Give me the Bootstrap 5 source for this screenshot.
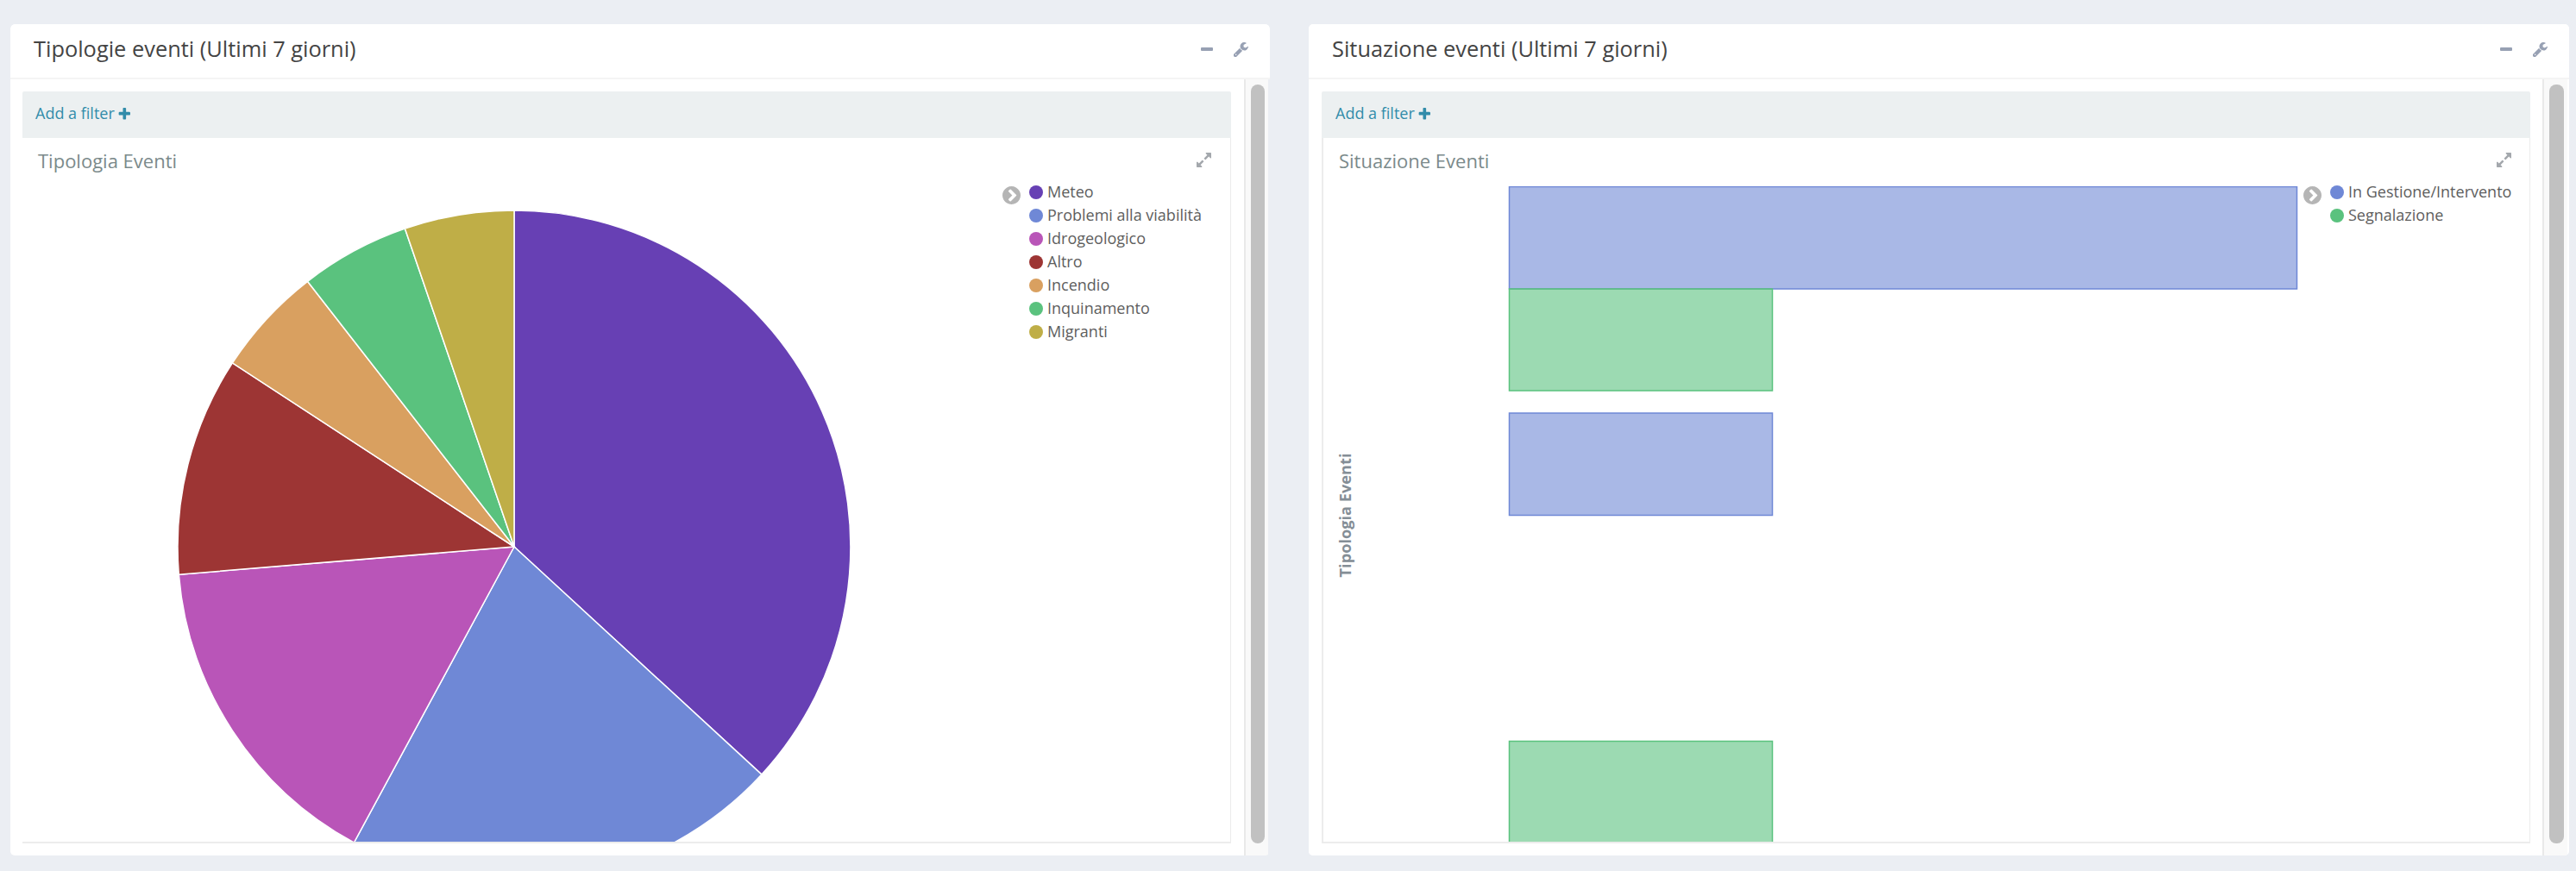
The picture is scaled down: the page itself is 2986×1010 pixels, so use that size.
<!DOCTYPE html>
<html lang="it">
<head>
<meta charset="utf-8">
<title>Eventi</title>
<link href="https://cdn.jsdelivr.net/npm/bootstrap@5.3.0/dist/css/bootstrap.min.css" rel="stylesheet">
<style>
html,body{height:100%;}
body{background:#ebeef3;font-family:"Open Sans","Noto Sans",sans-serif;color:#444;overflow:hidden;}
.dash{padding:28px 8px 0 12px;gap:45px;height:992px;box-sizing:content-box;}
.dash-card{flex:1 1 0;min-width:0;height:964px;background:#fff;border:0;border-radius:5px;overflow:hidden;}
.dash-card-l{flex:0 0 1460px;background:transparent;}
.dash-head{height:64px;padding:0 25px 4px 27px;background:#fff;border:0;border-bottom:2px solid #f4f4f4;border-radius:0;}
.dash-title{font-size:25.4px;font-weight:400;margin:0;color:#444;line-height:1;}
.tool-ico{fill:#97a0b3;display:block;}
.tool-gap{gap:24px;}
.tool-minus{width:14px;height:4px;background:#97a0b3;border-radius:1px;}
.scroll-track{width:28px;margin-right:2px;flex:none;background:#f9f9f9;border-left:2px solid #e9e9e9;padding:6px 4px 14px 6px;}
.scroll-track-r{width:29px;}
.scroll-thumb{height:880px;background:#c1c1c1;border-radius:8px;}
.dash-main{padding:14px 15px 0 14px;min-width:0;background:#fff;}
.dash-main-r{padding:14px 14px 0 15px;}
.filter-bar{height:54px;background:#ecf0f1;padding:0 0 3px 15px;color:#328caa;font-size:18px;border-radius:2px 2px 0 0;}
.dash-main-r .filter-bar{padding-left:16px;}
.plus-ico{fill:#328caa;margin-left:4px;}
.viz{height:818px;border:solid #ececec;border-width:0 1px 2px 0;overflow:hidden;}
.viz-b{border-left-width:2px;}
.viz-head{height:56px;padding:0 22px 5px 18px;}
.viz-b .viz-head{padding-right:21px;}
.viz-title{font-size:22px;color:#7b8a8b;line-height:1;}
.expand-ico{fill:#a4a8ad;}
.chart-area{height:760px;}
.chart-svg{flex:none;display:block;}
.legend-col{flex:1 1 0;min-width:0;}
.chev{fill:#b5b5b5;flex:none;margin-top:0;}
.legend-list{margin:-7px 0 0 10px;padding:0;list-style:none;font-size:18px;color:#5e5e5e;}
.legend-list li{height:27px;gap:5px;white-space:nowrap;}
.dot{width:16px;height:16px;border-radius:50%;flex:none;}
.axis-t{font-family:"Open Sans",sans-serif;font-size:18.2px;font-weight:700;fill:#848e96;}
</style>
</head>
<body>
<svg class="d-none" xmlns="http://www.w3.org/2000/svg">
  <symbol id="i-wrench" viewBox="128 128 1600 1600"><path d="M448 1472q0-26-19-45t-45-19-45 19-19 45 19 45 45 19 45-19 19-45zm644-420l-682 682q-37 37-90 37-52 0-91-37l-106-108q-38-36-38-90 0-53 38-91l681-681q39 98 114.5 173.5t173.5 114.5zm634-435q0 39-23 106-47 134-164.5 217.5t-258.5 83.5q-185 0-316.5-131.5t-131.5-316.5 131.5-316.5 316.5-131.5q58 0 121.5 16.5t107.5 46.5q16 11 16 28t-16 28l-293 169v224l193 106q5-3 79-48.5t135.5-81 70.5-35.5q15 0 23.5 10t8.5 25z"/></symbol>
  <symbol id="i-expand" viewBox="128 128 1536 1536"><path d="M883 1056q0 13-10 23l-332 332 144 144q19 19 19 45t-19 45-45 19h-448q-26 0-45-19t-19-45v-448q0-26 19-45t45-19 45 19l144 144 332-332q10-10 23-10t23 10l114 114q10 10 10 23zm781-864v448q0 26-19 45t-45 19-45-19l-144-144-332 332q-10 10-23 10t-23-10l-114-114q-10-10-10-23t10-23l332-332-144-144q-19-19-19-45t19-45 45-19h448q26 0 45 19t19 45z"/></symbol>
  <symbol id="i-chev" viewBox="128 128 1536 1536"><path d="M845 1395l454-454q19-19 19-45t-19-45l-454-454q-19-19-45-19t-45 19l-102 102q-19 19-19 45t19 45l307 307-307 307q-19 19-19 45t19 45l102 102q19 19 45 19t45-19zm819-499q0 209-103 385.5t-279.5 279.5-385.5 103-385.5-103-279.5-279.5-103-385.5 103-385.5 279.5-279.5 385.5-103 385.5 103 279.5 279.5 103 385.5z"/></symbol>
  <symbol id="i-plus" viewBox="128 128 1472 1472"><path d="M1600 736v192q0 40-28 68t-68 28h-416v416q0 40-28 68t-68 28h-192q-40 0-68-28t-28-68v-416h-416q-40 0-68-28t-28-68v-192q0-40 28-68t68-28h416v-416q0-40 28-68t68-28h192q40 0 68 28t28 68v416h416q40 0 68 28t28 68z"/></symbol>
</svg>

<div class="dash d-flex">

  <div class="card dash-card dash-card-l d-flex flex-column">
    <div class="card-header dash-head d-flex align-items-center justify-content-between">
      <h3 class="dash-title">Tipologie eventi (Ultimi 7 giorni)</h3>
      <div class="d-flex align-items-center tool-gap">
        <span class="tool-minus"></span>
        <svg class="tool-ico" width="17" height="17"><use href="#i-wrench"/></svg>
      </div>
    </div>
    <div class="d-flex flex-grow-1">
      <div class="dash-main flex-grow-1">
        <div class="filter-bar d-flex align-items-center">Add a filter<svg class="plus-ico" width="14" height="14"><use href="#i-plus"/></svg></div>
        <div class="viz">
          <div class="viz-head d-flex align-items-center justify-content-between">
            <span class="viz-title">Tipologia Eventi</span>
            <svg class="expand-ico" width="17" height="17"><use href="#i-expand"/></svg>
          </div>
          <div class="chart-area d-flex">
            <svg class="chart-svg" viewBox="26 216 1136 760" width="1136" height="760" stroke="#fff" stroke-width="1.5">
              <path fill="#6740b4" d="M596 634L596 244A390 390 0 0 1 882.9 898.1Z"/>
              <path fill="#6f88d6" d="M596 634L882.9 898.1A390 390 0 0 1 410.4 977Z"/>
              <path fill="#b955b8" d="M596 634L410.4 977A390 390 0 0 1 207.3 666.2Z"/>
              <path fill="#9d3534" d="M596 634L207.3 666.2A390 390 0 0 1 269.4 420.9Z"/>
              <path fill="#d9a060" d="M596 634L269.4 420.9A390 390 0 0 1 356.5 326.3Z"/>
              <path fill="#5ac27e" d="M596 634L356.5 326.3A390 390 0 0 1 469.4 265.1Z"/>
              <path fill="#bfae47" d="M596 634L469.4 265.1A390 390 0 0 1 596 244Z"/>
            </svg>
            <div class="legend-col d-flex align-items-start">
              <svg class="chev" width="21" height="21"><use href="#i-chev"/></svg>
              <ul class="legend-list">
                <li class="d-flex align-items-center"><span class="dot" style="background:#6740b4"></span>Meteo</li>
                <li class="d-flex align-items-center"><span class="dot" style="background:#6f88d6"></span>Problemi alla viabilità</li>
                <li class="d-flex align-items-center"><span class="dot" style="background:#b955b8"></span>Idrogeologico</li>
                <li class="d-flex align-items-center"><span class="dot" style="background:#9d3534"></span>Altro</li>
                <li class="d-flex align-items-center"><span class="dot" style="background:#d9a060"></span>Incendio</li>
                <li class="d-flex align-items-center"><span class="dot" style="background:#5ac27e"></span>Inquinamento</li>
                <li class="d-flex align-items-center"><span class="dot" style="background:#bfae47"></span>Migranti</li>
              </ul>
            </div>
          </div>
        </div>
      </div>
      <div class="scroll-track"><div class="scroll-thumb"></div></div>
    </div>
  </div>

  <div class="card dash-card d-flex flex-column">
    <div class="card-header dash-head d-flex align-items-center justify-content-between">
      <h3 class="dash-title">Situazione eventi (Ultimi 7 giorni)</h3>
      <div class="d-flex align-items-center tool-gap">
        <span class="tool-minus"></span>
        <svg class="tool-ico" width="17" height="17"><use href="#i-wrench"/></svg>
      </div>
    </div>
    <div class="d-flex flex-grow-1">
      <div class="dash-main dash-main-r flex-grow-1">
        <div class="filter-bar d-flex align-items-center">Add a filter<svg class="plus-ico" width="14" height="14"><use href="#i-plus"/></svg></div>
        <div class="viz viz-b">
          <div class="viz-head d-flex align-items-center justify-content-between">
            <span class="viz-title">Situazione Eventi</span>
            <svg class="expand-ico" width="17" height="17"><use href="#i-expand"/></svg>
          </div>
          <div class="chart-area d-flex">
            <svg class="chart-svg" viewBox="1534 216 1136 760" width="1136" height="760" stroke-width="1.5">
              <rect x="1749.5" y="216.5" width="913" height="118.5" fill="#6f88d6" fill-opacity=".6" stroke="#6f88d6"/>
              <rect x="1749.5" y="335" width="305" height="118" fill="#5ac27e" fill-opacity=".6" stroke="#5ac27e"/>
              <rect x="1749.5" y="479" width="305" height="118.5" fill="#6f88d6" fill-opacity=".6" stroke="#6f88d6"/>
              <rect x="1749.5" y="859.5" width="305" height="118" fill="#5ac27e" fill-opacity=".6" stroke="#5ac27e"/>
              <text class="axis-t" stroke="none" text-anchor="middle" transform="translate(1566 597.5) rotate(-90)">Tipologia Eventi</text>
            </svg>
            <div class="legend-col d-flex align-items-start">
              <svg class="chev" width="21" height="21"><use href="#i-chev"/></svg>
              <ul class="legend-list">
                <li class="d-flex align-items-center"><span class="dot" style="background:#6f88d6"></span>In Gestione/Intervento</li>
                <li class="d-flex align-items-center"><span class="dot" style="background:#5ac27e"></span>Segnalazione</li>
              </ul>
            </div>
          </div>
        </div>
      </div>
      <div class="scroll-track scroll-track-r"><div class="scroll-thumb"></div></div>
    </div>
  </div>

</div>
<script src="https://cdn.jsdelivr.net/npm/bootstrap@5.3.0/dist/js/bootstrap.bundle.min.js"></script>
</body>
</html>
